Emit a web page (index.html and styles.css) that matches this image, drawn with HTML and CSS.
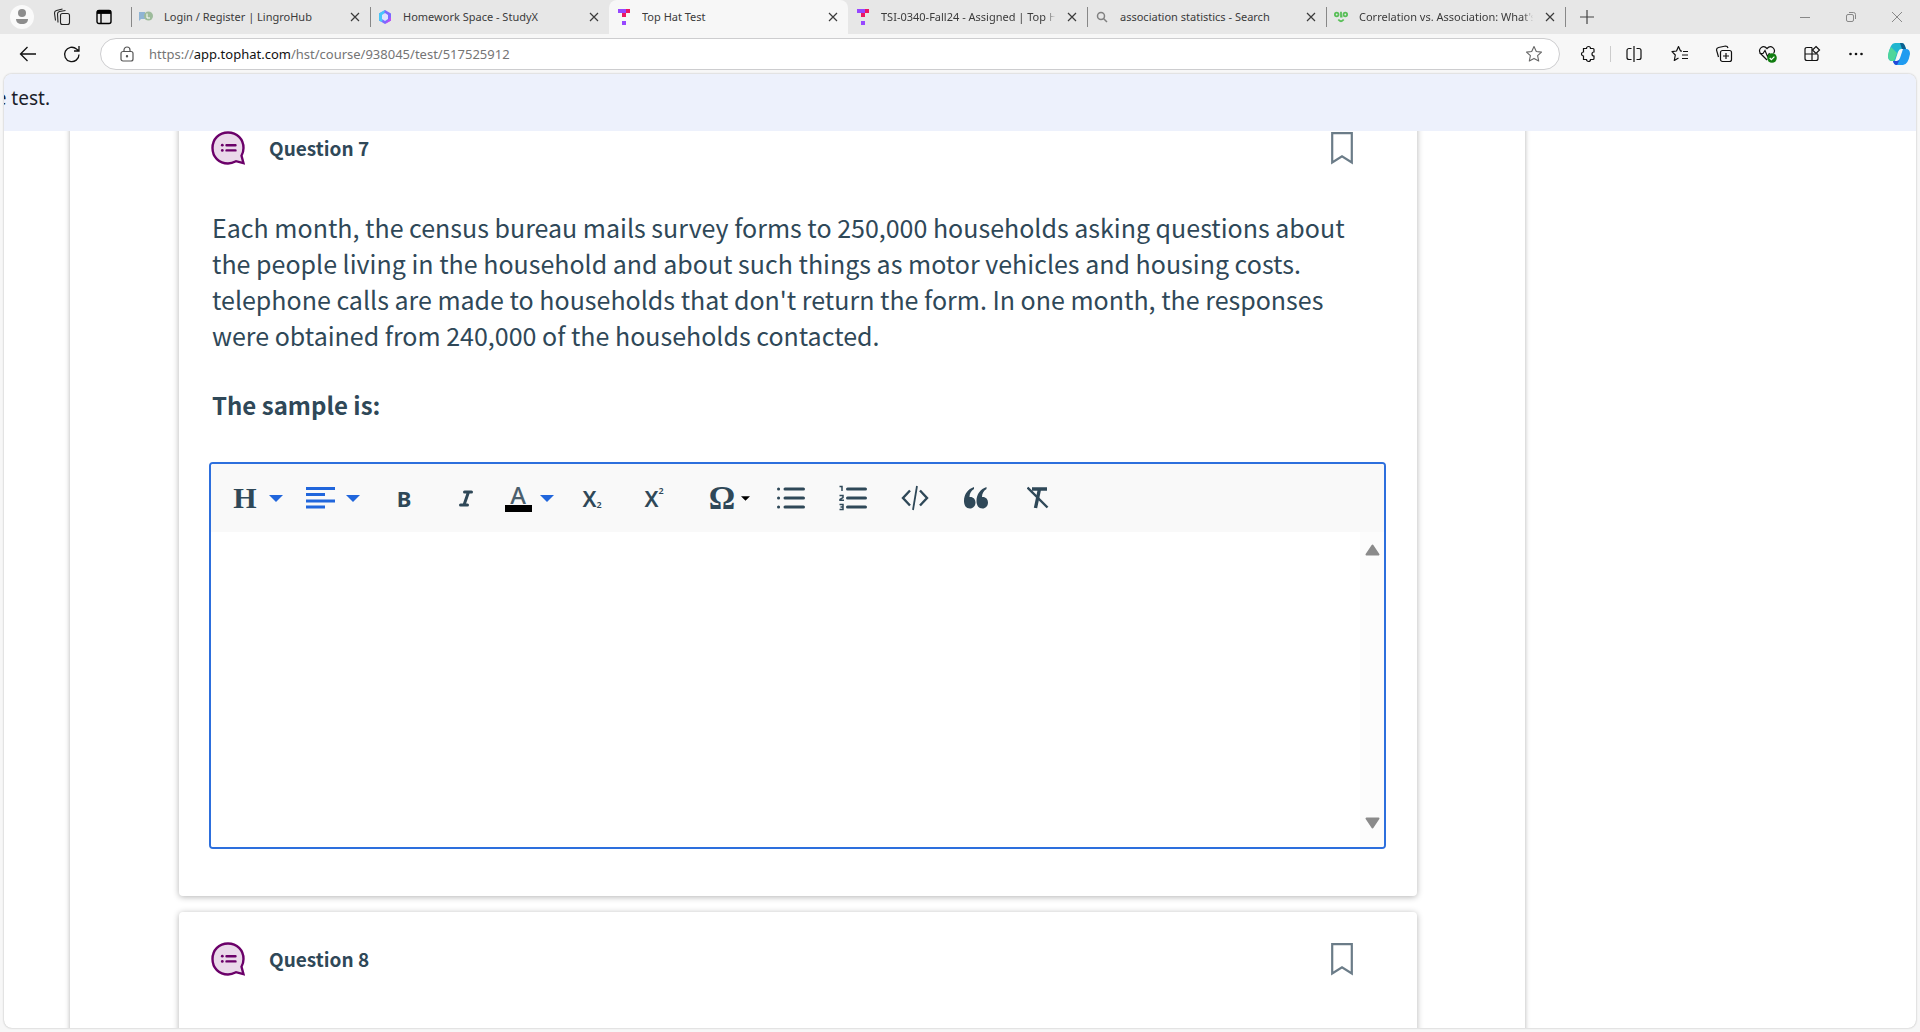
FILE: index.html
```html
<!DOCTYPE html>
<html lang="en">
<head>
<meta charset="utf-8">
<title>Top Hat Test</title>
<link rel="stylesheet" href="styles.css">
</head>
<body>
<svg class="defs" aria-hidden="true">
  <symbol id="x" viewBox="0 0 10 10"><path d="M1 1l8 8M9 1l-8 8" fill="none" stroke="currentColor" stroke-width="1.2"/></symbol>
  <symbol id="caret" viewBox="0 0 14 7"><path d="M0 0h14L7 7z" fill="currentColor"/></symbol>
  <symbol id="tophat" viewBox="0 0 12 16"><path d="M0 0h8v4H0zM4 12h4v4H4z" fill="#9747ff"/><path d="M8 0h4v4H8zM4 4h4v4H4z" fill="#ec1763"/></symbol>
  <symbol id="bubble" viewBox="0 0 34 34"><path d="M17 1.500C8 1.500 1.500 8 1.500 17S8 32.500 17 32.500c3 0 5.500-1 8-2.300l7.500 2-2-7.500c1.300-2.400 2-5 2-7.700C32.500 8 26 1.500 17 1.500z" fill="#ead9ea" stroke="#6b0069" stroke-width="2.400"/><path d="M15.500 14.200h9M15.500 19.400h9" stroke="#6b0069" stroke-width="2.400" stroke-linecap="round"/><circle cx="11.300" cy="14.200" r="1.400" fill="#6b0069"/><circle cx="11.300" cy="19.400" r="1.400" fill="#6b0069"/></symbol>
  <symbol id="bookmark" viewBox="0 0 22 33"><path d="M1.200 1.200h19.600v29.300L11 24.300 1.200 30.500z" fill="none" stroke="#6b7c88" stroke-width="2.200"/></symbol>
</svg>

<header class="tabbar">
  <div class="tab-tools">
    <button class="avatar" aria-label="Profile"><svg width="24" height="24"><circle cx="12" cy="12" r="12" fill="#fafafa"/><circle cx="12" cy="8" r="4" fill="#8d8d8d"/><path d="M6 14h12c0 3-2 5-6 5s-6-2-6-5z" fill="#8d8d8d"/></svg></button>
    <button aria-label="Workspaces"><svg width="18" height="18" fill="none" stroke="#222" stroke-width="1.100"><rect x="7.500" y="5.500" width="9" height="11" rx="2"/><path d="M5 14.500L4.500 6q0-2 2-2.500l6-1M2.500 12.500L1.500 5q0-2 2-2.500l6-1.500"/></svg></button>
    <button aria-label="Tab actions"><svg width="16" height="16" fill="none" stroke="#000" stroke-width="1.400"><rect x="1" y="1.500" width="14" height="13" rx="2"/><path d="M1 3.200h14" stroke-width="3.400"/><path d="M5 4v10"/></svg></button>
  </div>
  <nav class="tabs" aria-label="Tabs">
    <div class="tab"><svg class="fav" viewBox="0 0 14 14"><path d="M0 2h6v7H2l-2 2z" fill="#8fb4d4"/><circle cx="9.500" cy="6" r="4.500" fill="#9dbb9b"/><path d="M8 3.500v4.500h3" stroke="#fff" fill="none"/></svg><span>Login / Register | LingroHub</span><button aria-label="Close tab"><svg><use href="#x"/></svg></button></div>
    <div class="tab"><svg class="fav" viewBox="0 0 14 14"><path d="M7 0l6 3.500v7L7 14l-6-3.500v-7z" fill="#7a6bff"/><path d="M7 0L1 3.500v7L4 12z" fill="#46c8fa"/><path d="M7 14l6-3.500V7z" fill="#c04cf5"/><path d="M7 3l3 2v4l-3 2-3-2V5z" fill="#dfe3ff"/></svg><span>Homework Space - StudyX</span><button aria-label="Close tab"><svg><use href="#x"/></svg></button></div>
    <div class="tab active"><svg class="fav hat"><use href="#tophat"/></svg><span>Top Hat Test</span><button aria-label="Close tab"><svg><use href="#x"/></svg></button></div>
    <div class="tab"><svg class="fav hat"><use href="#tophat"/></svg><span class="fade">TSI-0340-Fall24 - Assigned | Top Hat</span><button aria-label="Close tab"><svg><use href="#x"/></svg></button></div>
    <div class="tab"><svg class="fav" viewBox="0 0 14 14" fill="none" stroke="#808080" stroke-width="1.500"><circle cx="6" cy="6" r="3.500"/><path d="M8.500 8.500l3.500 3.500"/></svg><span>association statistics - Search</span><button aria-label="Close tab"><svg><use href="#x"/></svg></button></div>
    <div class="tab"><svg class="fav" viewBox="0 0 14 14" fill="none" stroke="#58bf57" stroke-width="1.800"><circle cx="2.700" cy="4.500" r="1.800"/><path d="M7 1.800V6.500h1.500M4.300 9.500q2.700 3.500 5.400 0"/><circle cx="11.300" cy="4.500" r="1.800"/></svg><span class="fade">Correlation vs. Association: What's</span><button aria-label="Close tab"><svg><use href="#x"/></svg></button></div>
  </nav>
  <button class="newtab" aria-label="New tab"><svg width="14" height="14"><path d="M7 0v14M0 7h14" stroke="#444" stroke-width="1.200"/></svg></button>
  <div class="winctl">
    <button aria-label="Minimize"><svg width="10" height="10"><path d="M0 5.500h10" stroke="#888"/></svg></button>
    <button aria-label="Restore"><svg width="10" height="10" fill="none" stroke="#888"><rect x=".5" y="2.500" width="7" height="7" rx="1.500"/><path d="M3 .5h4.500q2 0 2 2V7"/></svg></button>
    <button aria-label="Close"><svg width="10" height="10"><path d="M0 0l10 10M10 0L0 10" stroke="#888"/></svg></button>
  </div>
</header>

<div class="navbar">
  <button aria-label="Back"><svg width="18" height="16" fill="none" stroke="#111" stroke-width="1.300"><path d="M17 8H1.500M8.500 1l-7 7 7 7"/></svg></button>
  <button aria-label="Refresh"><svg width="18" height="18" fill="none" stroke="#111" stroke-width="1.300"><path d="M16 9.500A7.200 7.200 0 1 1 13.500 4L16 6M16 1v5h-5"/></svg></button>
  <div class="omnibox">
    <svg width="14" height="16" fill="none" stroke="#555" stroke-width="1.200"><rect x="1" y="5.500" width="12" height="9.500" rx="2"/><path d="M4 5.500V4a3 3 0 0 1 6 0v1.500"/><circle cx="7" cy="10.200" r=".6" fill="#555"/></svg>
    <a href="#">https://<b>app.tophat.com</b>/hst/course/938045/test/517525912</a>
    <button aria-label="Add to favorites"><svg width="18" height="18" fill="none" stroke="#666" stroke-width="1.100" stroke-linejoin="round"><path d="M9 1.500l2.300 5 5.200.6-3.900 3.600 1.100 5.300L9 13.400 4.300 16l1.100-5.300L1.500 7.100l5.200-.6z"/></svg></button>
  </div>
  <div class="actions">
    <button aria-label="Extensions"><svg width="18" height="18" fill="none" stroke="#111" stroke-width="1.200"><path d="M4.500 3.500h3a2 2 0 0 1 4 0H14q1 0 1 1V7a2 2 0 0 0 0 4v2.500q0 1-1 1h-2.500a2 2 0 0 1-4 0H4.500V11a2 2 0 0 1 0-4z"/></svg></button>
    <button class="ruled" aria-label="Split screen"><svg width="18" height="18" fill="none" stroke="#111" stroke-width="1.200"><path d="M9 1v16M6.500 3.500H4a2 2 0 0 0-2 2v7q0 2 2 2h2.500M11.500 3.500H14q2 0 2 2v7q0 2-2 2h-2.500"/></svg></button>
    <button aria-label="Favorites"><svg width="18" height="18" fill="none" stroke="#111" stroke-width="1.200" stroke-linejoin="round"><path d="M11 6.200L9.500 6 7.500 1.500l-2 4.500-4.500.7 3.300 3.300-1 5.500 4.200-2.500M12 6.500h5M11 10h6M11 13.500h6"/></svg></button>
    <button aria-label="Collections"><svg width="18" height="18" fill="none" stroke="#111" stroke-width="1.200"><rect x="5.500" y="5.500" width="11" height="11" rx="2"/><path d="M11 8v6M8 11h6M3.500 12L1.500 5q0-2 2-2.500l7-1.500q2 0 2.500 2"/></svg></button>
    <button aria-label="Browser essentials"><svg width="20" height="18" fill="none" stroke="#111" stroke-width="1.200"><path d="M9 15L2.500 8.500C-.5 4 5-1 9 3.500c4-4.500 9.500.5 6.500 5M1.500 8.500H5l2-3 2.500 6 2-3.500"/><circle cx="14" cy="13" r="4.800" fill="#107c10" stroke="none"/><path d="M11.700 13l1.700 1.700 3-3" stroke="#fff"/></svg></button>
    <button aria-label="Apps"><svg width="18" height="18" fill="none" stroke="#111" stroke-width="1.200"><path d="M9 2.500H4q-2 0-2 2v9q0 2 2 2h9q2 0 2-2V9.500M9 2.500v13M2 9h13"/><path d="M13 1.500l3.500 3.500L13 8.500 9.500 5z"/></svg></button>
    <button aria-label="Settings and more"><svg width="18" height="18" fill="#111"><circle cx="3.500" cy="9" r="1.300"/><circle cx="9" cy="9" r="1.300"/><circle cx="14.500" cy="9" r="1.300"/></svg></button>
    <button class="copilot" aria-label="Copilot"><svg width="24" height="24"><path d="M8 1h7q2 0 3 3l1 3h-5q-2 0-3 3l-3 9H5q-4 0-4-5Q3 1 8 1z" fill="#1fb6d0"/><path d="M1 13q1-5 3-8l6 6-3 8H5q-4 0-4-6z" fill="#4fd69a"/><path d="M13 1h2q2 0 3 3l1 3h-4z" fill="#0c5f8f"/><path d="M16 23H9q-2 0-3-4h4q2 0 3-3l3-9h3q4 0 4 5-2 11-7 11z" fill="#1f9bf0"/><path d="M6 19h4q2 0 3-2l-3 6q-3 0-4-4z" fill="#2448d8"/></svg></button>
  </div>
</div>

<main class="viewport">
  <div class="banner"><p>You can now submit the test.</p></div>
  <div class="scroller">
    <div class="sheet">
      <section class="card">
        <header class="card-head"><svg class="bubble"><use href="#bubble"/></svg><h2>Question 7</h2><button aria-label="Bookmark question 7"><svg class="mark"><use href="#bookmark"/></svg></button></header>
        <div class="prompt">
          <p>Each month, the census bureau mails survey forms to 250,000 households asking questions about<br>the people living in the household and about such things as motor vehicles and housing costs.<br>telephone calls are made to households that don't return the form. In one month, the responses<br>were obtained from 240,000 of the households contacted.</p>
          <p class="ask"><label for="answer">The sample is:</label></p>
        </div>
        <div class="editor">
          <div class="tools" role="toolbar" aria-label="Formatting">
            <button class="t-head" aria-label="Heading"><span class="serif">H</span><svg class="caret"><use href="#caret"/></svg></button>
            <button class="t-align" aria-label="Align"><svg width="29" height="22" stroke="#2166dc" stroke-width="3"><path d="M0 1.500h29M0 7.500h19M0 14h29M0 20h19"/></svg><svg class="caret"><use href="#caret"/></svg></button>
            <button aria-label="Bold"><span class="bold">B</span></button>
            <button aria-label="Italic"><svg width="14" height="17" fill="none" stroke="#2f4858" stroke-width="3" stroke-linecap="round"><path d="M5.500 2h7M1.500 15h7M9.500 2l-4.500 13"/></svg></button>
            <button class="t-color" aria-label="Text color"><span class="swatch">A</span><svg class="caret"><use href="#caret"/></svg></button>
            <button aria-label="Subscript"><span class="script">X<small class="low">2</small></span></button>
            <button aria-label="Superscript"><span class="script">X<small class="high">2</small></span></button>
            <button class="t-omega" aria-label="Special characters"><span class="serif omega">Ω</span><svg class="caret small"><use href="#caret"/></svg></button>
            <button aria-label="Bulleted list"><svg width="28" height="24" fill="none" stroke="#2f4858" stroke-width="3" stroke-linecap="round"><path d="M8 3h18.500M8 12h18.500M8 21h18.500M1.500 3h.1M1.500 12h.1M1.500 21h.1"/></svg></button>
            <button aria-label="Numbered list"><svg width="28" height="26" fill="none" stroke="#2f4858"><path d="M8.500 4h18M8.500 13h18M8.500 22h18" stroke-width="3" stroke-linecap="round"/><path d="M.5 1.500H3V6M.5 10.500H4v2l-3 2v.7h4M.5 19.500H4v5H.5M1.500 22H4" stroke-width="1.500"/></svg></button>
            <button aria-label="Code"><svg width="28" height="26" fill="none" stroke="#2f4858" stroke-width="2.400"><path d="M9 5.500L2 13l7 7.500M19 5.500l7 7.500-7 7.500"/><path d="M16 1l-4 24" stroke-width="1.800"/></svg></button>
            <button aria-label="Quote"><svg width="26" height="22" fill="#2f4858"><path d="M10 0v2C7 4 5.500 6.500 5.500 10c3.500-.5 6 2 6 5.500S9 21.500 6 21.500C2 21.500 0 18.500 0 14 0 7 4 2 10 0z"/><path d="M22.500 0v2c-3 2-4.500 4.500-4.500 8 3.500-.5 6 2 6 5.500s-2.500 6-5.500 6c-4 0-6-3-6-7.500 0-7 4-12 10-14z"/></svg></button>
            <button aria-label="Clear formatting"><svg width="24" height="24" fill="none" stroke="#2f4858"><path d="M5 3h15M12.500 3L8.500 22" stroke-width="3.400"/><path d="M.5 1.500l20 20" stroke-width="2.400"/></svg></button>
          </div>
          <div class="field">
            <textarea id="answer"></textarea>
            <div class="track"><svg width="15" height="12"><path d="M7.500 1.500L13.500 10.500h-12z" fill="#8b8b8b" stroke="#8b8b8b" stroke-width="2" stroke-linejoin="round"/></svg><svg width="15" height="12"><path d="M7.500 10.500L1.500 1.500h12z" fill="#8b8b8b" stroke="#8b8b8b" stroke-width="2" stroke-linejoin="round"/></svg></div>
          </div>
        </div>
      </section>
      <section class="card">
        <header class="card-head"><svg class="bubble"><use href="#bubble"/></svg><h2>Question 8</h2><button aria-label="Bookmark question 8"><svg class="mark"><use href="#bookmark"/></svg></button></header>
        <div class="prompt"><p>A number of people in a survey were asked about the number of calls they answer each month and</p></div>
      </section>
    </div>
  </div>
</main>
</body>
</html>
```
FILE: styles.css
```css
* { box-sizing: border-box; }
body {
  margin: 0;
  height: 100vh;
  display: flex;
  flex-direction: column;
  overflow: hidden;
  background: #f7f7f7;
  color: #2f4858;
  font-family: "Noto Sans", "Open Sans", sans-serif;
}
button {
  display: flex;
  align-items: center;
  justify-content: center;
  padding: 0;
  border: 0;
  background: none;
  color: inherit;
  font: inherit;
}
svg { flex: none; }
.defs { position: absolute; width: 0; height: 0; }

/* Tab strip */
.tabbar { display: flex; height: 34px; flex: none; background: #e7e7e7; }
.tab-tools { display: flex; align-items: center; gap: 19px; width: 131px; flex: none; padding-left: 10px; }
.tab-tools button:last-child { margin-left: 6px; }
.tabs { display: flex; flex: 0 1 1434px; min-width: 0; }
.tab {
  position: relative;
  display: flex;
  align-items: center;
  flex: 1 1 0;
  min-width: 0;
  padding: 0 10px 0 8px;
  color: #3b3b3b;
  font-size: 11px;
  line-height: 20px;
}
.tab::before {
  content: "";
  position: absolute;
  left: 0;
  top: 7px;
  width: 1px;
  height: 20px;
  background: #888;
}
.tab.active::before, .tab.active + .tab::before { display: none; }
.tab.active { background: #f7f7f7; border-radius: 8px 8px 0 0; }
.tab span { flex: 1; min-width: 0; margin: 0 8px 0 11px; overflow: hidden; white-space: nowrap; }
.tab span.fade { -webkit-mask-image: linear-gradient(to right, #000 92%, transparent 98%); mask-image: linear-gradient(to right, #000 92%, transparent 98%); }
.tab button svg { width: 10px; height: 10px; }
.fav { width: 14px; height: 14px; }
.fav.hat { height: 16px; }
.newtab { width: 44px; flex: none; box-shadow: inset 1px 0 0 #e7e7e7; }
.winctl { display: flex; margin-left: auto; }
.winctl button { width: 46px; }
.newtab { background: linear-gradient(#888, #888) 0 center / 1px 20px no-repeat; box-shadow: none; }

/* Address row */
.navbar { display: flex; align-items: center; height: 40px; flex: none; padding: 0 0 1px 6px; }
.navbar > button { width: 44px; height: 32px; }
.omnibox {
  display: flex;
  align-items: center;
  flex: 1;
  height: 32px;
  margin: 0 6px;
  padding: 0 16px 0 19px;
  border: 1px solid #cdcdcf;
  border-radius: 16px;
  background: #fff;
}
.omnibox a { flex: 1; margin-left: 15px; color: #757575; font-size: 13px; line-height: 20px; text-decoration: none; }
.omnibox b { color: #111; font-weight: 400; }
.actions { display: flex; }
.actions button { width: 44px; height: 32px; }
.actions .ruled { background: linear-gradient(#ccc, #ccc) 0 center / 1px 16px no-repeat; width: 48px; }
.actions .copilot { width: 42px; }

/* Page frame */
.viewport {
  display: flex;
  flex: 1;
  flex-direction: column;
  min-height: 0;
  margin: 0 4px 4px;
  overflow: hidden;
  border-radius: 8px;
  background: #fff;
  box-shadow: 0 0 2px #aaa;
}
.banner { flex: none; height: 57px; overflow: hidden; background: #edf1fc; color: #1c1f2b; }
.banner p { display: flex; justify-content: flex-end; width: 46px; margin: 0; font-size: 19px; line-height: 48px; white-space: nowrap; }
.scroller { flex: 1; min-height: 0; overflow: hidden; }
.sheet {
  width: 76.1%;
  margin: -30px 0 0 66px;
  padding: 0 108px 0 109px;
  background: #fff;
  box-shadow: 0 0 5px rgba(0, 0, 0, .3);
}
.card {
  margin-bottom: 16px;
  padding: 0 31px 47px 30px;
  border-radius: 4px;
  background: #fff;
  box-shadow: 0 1px 6px rgba(0, 0, 0, .3);
}
.card-head { display: flex; align-items: center; height: 94px; padding: 0 33px 0 2px; }
.card-head h2 { flex: 1; margin: 0 0 0 24px; font: 700 19px/28px "Noto Sans CJK SC", sans-serif; }
.bubble { width: 34px; height: 34px; }
.mark { display: block; width: 22px; height: 33px; }
.prompt { padding: 14px 0 39px 3px; font: 25px/36px "Noto Sans CJK SC", sans-serif; white-space: nowrap; }
.prompt p { margin: 0; }
.prompt .ask { padding-top: 34px; font-weight: 700; font-size: 24px; }

/* Answer editor */
.editor { overflow: hidden; border: 2px solid #2d6fdd; border-radius: 4px; }
.tools { display: flex; align-items: center; height: 68px; padding-left: 12px; background: #f9f9f9; color: #2f4858; }
.tools button { width: 62px; height: 68px; }
.tools .t-head { width: 70px; gap: 12px; }
.tools .t-align { width: 80px; gap: 11px; }
.tools .t-color { width: 64px; gap: 8px; }
.tools .t-omega { width: 75px; gap: 6px; padding-left: 14px; }
.caret { width: 14px; height: 7px; color: #2166dc; }
.caret.small { width: 9px; height: 5px; color: #000; }
.serif { font: 700 30px/36px "Liberation Serif", serif; }
.omega { font-size: 33px; }
.bold { font: 700 22px/24px "Noto Sans", sans-serif; }
.swatch { width: 27px; border-bottom: 7px solid #000; color: #4b5f6d; font: 500 24px/21px "Noto Sans", sans-serif; }
.script { display: flex; font: 600 22px/24px "Noto Sans", sans-serif; }
.script small { font-size: 9px; line-height: 10px; }
.low { align-self: flex-end; }
.high { align-self: flex-start; }
.field { display: flex; height: 315px; }
.field textarea { flex: 1; padding: 12px; border: 0; outline: 0; resize: none; background: #fff; color: inherit; font: 20px/28px "Noto Sans CJK SC", sans-serif; }
.track { display: flex; flex-direction: column; align-items: center; justify-content: space-between; width: 24px; padding: 12px 0 18px; background: #fcfcfc; }
```
